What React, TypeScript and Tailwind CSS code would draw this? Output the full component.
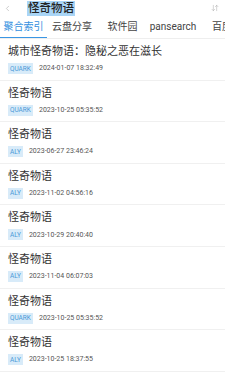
import { ChevronLeft, ArrowDownUp } from "lucide-react"

const items = [
  { title: "城市怪奇物语：隐秘之恶在滋长", src: "QUARK", time: "2024-01-07 18:32:49" },
  { title: "怪奇物语", src: "QUARK", time: "2023-10-25 05:35:52" },
  { title: "怪奇物语", src: "ALY", time: "2023-06-27 23:46:24" },
  { title: "怪奇物语", src: "ALY", time: "2023-11-02 04:56:16" },
  { title: "怪奇物语", src: "ALY", time: "2023-10-29 20:40:40" },
  { title: "怪奇物语", src: "ALY", time: "2023-11-04 06:07:03" },
  { title: "怪奇物语", src: "QUARK", time: "2023-10-25 05:35:52" },
  { title: "怪奇物语", src: "ALY", time: "2023-10-25 18:37:55" },
]

const tabs = [
  { name: "聚合索引", w: "w-[47px] text-center" },
  { name: "云盘分享", w: "w-[50px] text-center" },
  { name: "软件园", w: "w-[51px] text-center" },
  { name: "pansearch", w: "w-[50px] text-center" },
  { name: "百度网盘", w: "w-[50px] pl-[14px] text-left" },
]

const App = () => {
  return (
    <div
      className="w-[225px] h-[375px] overflow-hidden bg-white text-[#333]"
      style={{ fontFamily: 'Roboto, "Noto Sans CJK SC", sans-serif' }}
    >
      <div className="flex items-center h-[16px] pl-[3px] pr-[6px]">
        <ChevronLeft className="w-[9px] h-[9px] text-[#aaa]" strokeWidth={1.5} />
        <div className="ml-[15px] flex-1 flex">
          <span className="bg-[#a9d5f6] text-[11.5px] leading-[15px] text-[#222] font-medium px-[1px]">怪奇物语</span>
        </div>
        <ArrowDownUp className="w-[8px] h-[8px] text-[#aaa]" strokeWidth={1.5} />
      </div>

      <div className="flex h-[23px] border-b border-[#eee] whitespace-nowrap overflow-hidden">
        {tabs.map((t, i) => (
          <div
            key={t.name}
            className={
              i === 0
                ? `relative shrink-0 ${t.w} text-[10px] leading-[21px] text-[#3390e0]`
                : `shrink-0 ${t.w} text-[10px] leading-[21px] text-[#444]`
            }
          >
            {t.name}
            {i === 0 && <div className="absolute left-0 right-0 bottom-[-1px] h-[2px] bg-[#3a96e4]" />}
          </div>
        ))}
      </div>

      <div className="flex flex-col">
        {items.map((it, i) => (
          <div key={i} className="px-[8px] pt-[5px] pb-[6px] h-[41.6px] border-b border-[#f0f0f0]">
            <div className="text-[11px] leading-[15px] text-[#333]">{it.title}</div>
            <div className="flex items-center mt-[4px] gap-[6px]">
              <span className="bg-[#d8ebf9] text-[#4b9ad8] text-[6.5px] leading-[10px] px-[2px] h-[11px] flex items-center">{it.src}</span>
              <span className="text-[7px] text-[#555]">{it.time}</span>
            </div>
          </div>
        ))}
      </div>
    </div>
  )
}

export default App
